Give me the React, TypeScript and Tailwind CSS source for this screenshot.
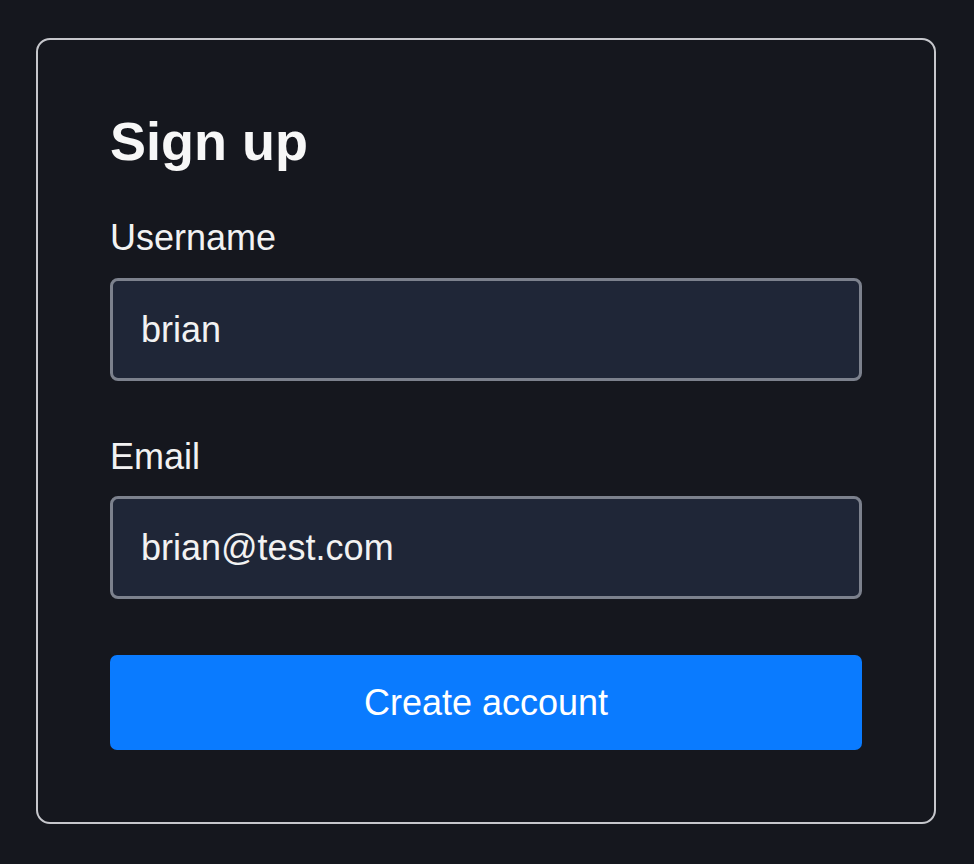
export default function App() {
  return (
    <div className="min-h-[864px] w-full bg-[#15171e] pl-[36px] pt-[38px]" style={{ fontFamily: '"Liberation Sans", Arial, sans-serif' }}>
      <div className="w-[900px] h-[786px] rounded-[14px] border-2 border-[#c6c7cc] px-[72px] pt-[74px]">
        <h1 className="text-[54px] leading-none font-bold text-[#f7f7f7]">Sign up</h1>
        <div className="mt-[52px] flex flex-col">
          <label className="text-[36px] leading-none text-[#f2f2f2] mb-[22px]">Username</label>
          <div className="h-[103px] rounded-[8px] border-[3px] border-[#7c818d] bg-[#1f2637] flex items-center pl-[28px] text-[36px] text-[#f2f2f2]">
            brian
          </div>
        </div>
        <div className="mt-[58px] flex flex-col">
          <label className="text-[36px] leading-none text-[#f2f2f2] mb-[21px]">Email</label>
          <div className="h-[103px] rounded-[8px] border-[3px] border-[#7c818d] bg-[#1f2637] flex items-center pl-[28px] text-[36px] text-[#f2f2f2]">
            brian@test.com
          </div>
        </div>
        <button className="mt-[56px] w-full h-[95px] rounded-[7px] bg-[#0a7bff] text-[36px] text-white flex items-center justify-center">
          Create account
        </button>
      </div>
    </div>
  );
}
